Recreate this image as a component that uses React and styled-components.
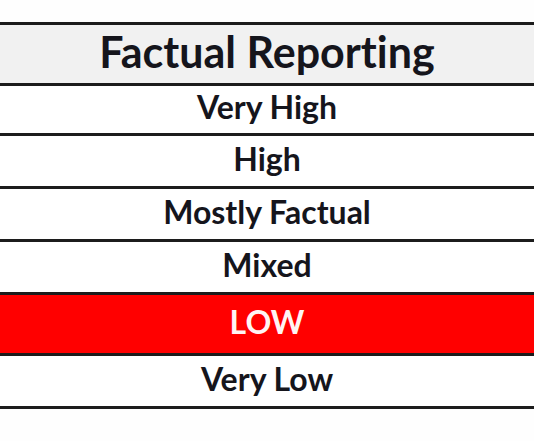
import styled, { createGlobalStyle } from "styled-components";

const GlobalStyle = createGlobalStyle`
  html, body {
    margin: 0;
    padding: 0;
    background: #fefefe;
  }
`;

const Page = styled.div`
  width: 534px;
  height: 441px;
  padding-top: 22px;
  box-sizing: border-box;
  overflow: hidden;
`;

const Table = styled.div`
  display: flex;
  flex-direction: column;
  margin: 0 -4px;
  border-top: 3px solid #1c1c1c;
`;

const Row = styled.div`
  height: ${(p) => p.$height}px;
  box-sizing: border-box;
  padding-bottom: 5px;
  display: flex;
  align-items: center;
  justify-content: center;
  border-bottom: 3px solid #1c1c1c;
  background: ${(p) => p.$bg || "#ffffff"};
  color: ${(p) => p.$color || "#15151c"};
  font-family: Lato, "Open Sans", sans-serif;
  font-weight: 700;
  font-size: ${(p) => p.$size || 32}px;
  font-variant-ligatures: none;
  line-height: 1;
`;

const rows = [
  { label: "Very High", height: 50 },
  { label: "High", height: 53 },
  { label: "Mostly Factual", height: 53 },
  { label: "Mixed", height: 53 },
  { label: "LOW", height: 61, bg: "#ff0000", color: "#fff4f4" },
  { label: "Very Low", height: 53 },
];

export default function App() {
  return (
    <>
      <GlobalStyle />
      <Page>
        <Table>
          <Row $height={61} $bg="#f1f1f1" $size={43}>
            Factual Reporting
          </Row>
          {rows.map((r) => (
            <Row key={r.label} $height={r.height} $bg={r.bg} $color={r.color}>
              {r.label}
            </Row>
          ))}
        </Table>
      </Page>
    </>
  );
}
